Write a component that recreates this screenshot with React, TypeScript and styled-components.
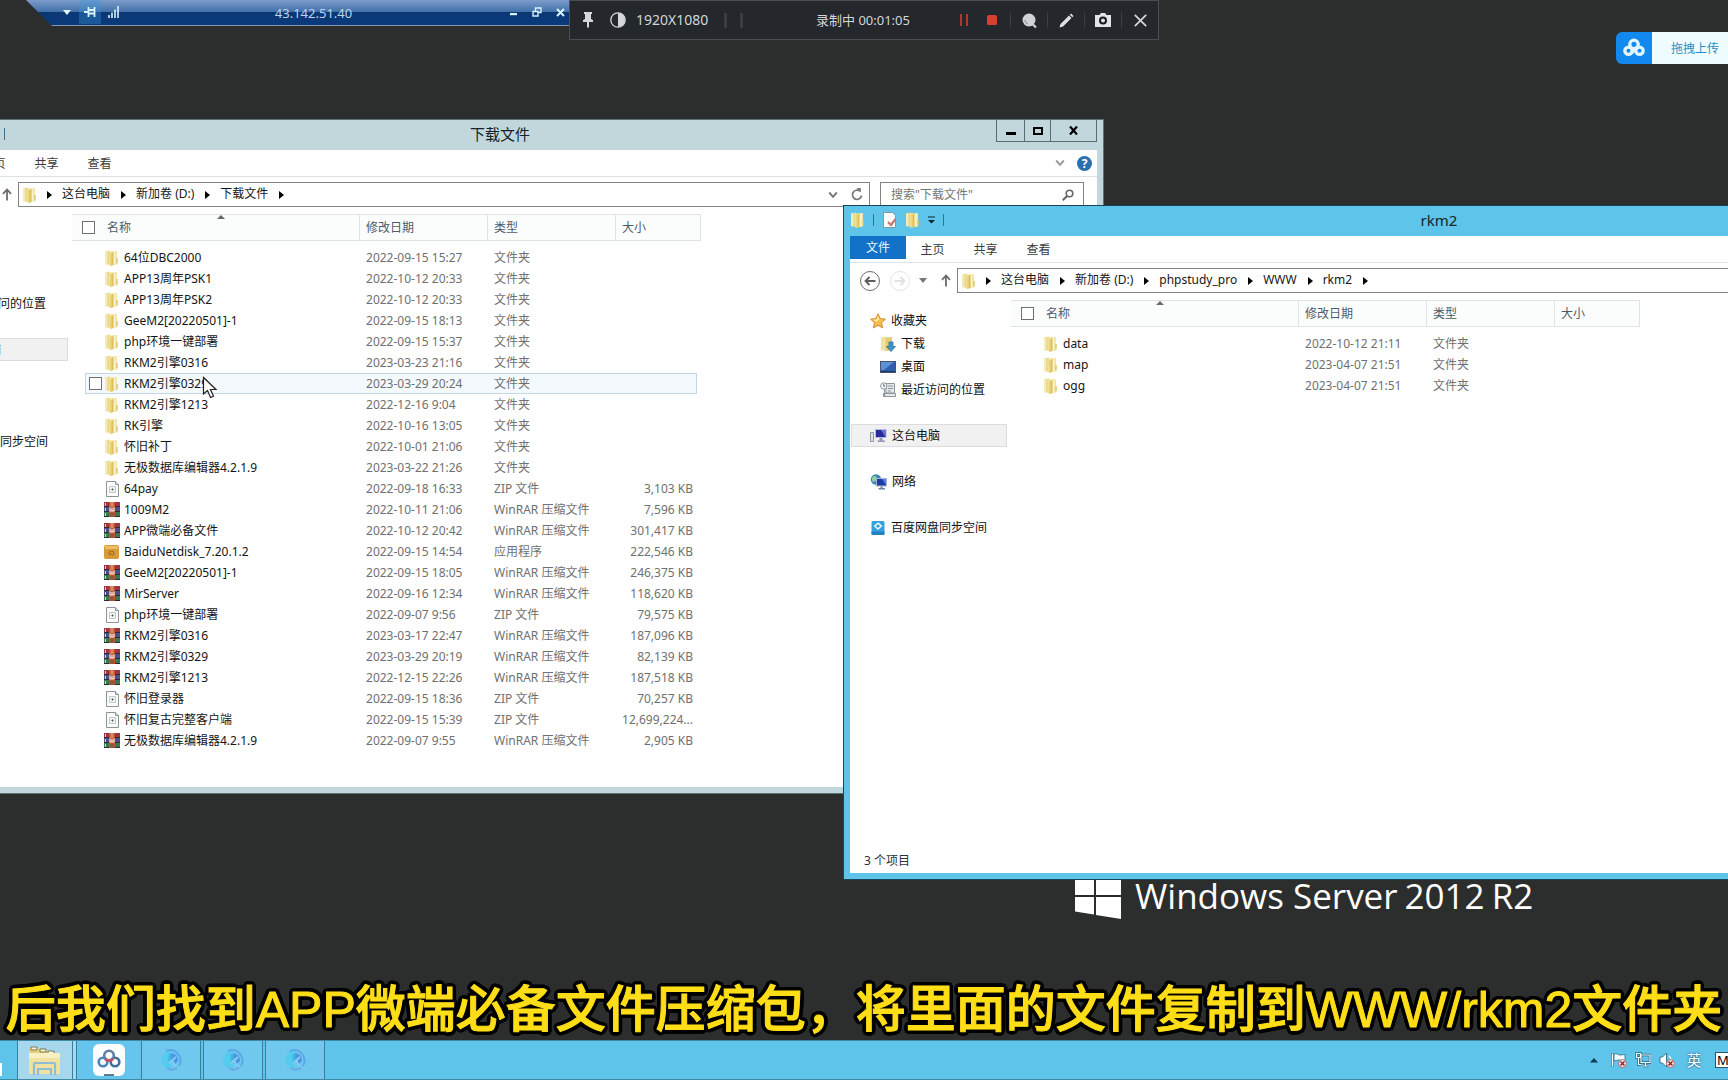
import React from "react";
import styled, { createGlobalStyle, css } from "styled-components";

const GlobalStyle = createGlobalStyle`
  *, *::before, *::after { box-sizing: border-box; }
  html, body, #root { height: 100%; }
  body {
    margin: 0;
    background: #2c2d2d;
    color: #111;
    font-family: "Noto Sans", "Noto Sans CJK SC", sans-serif;
    font-size: 12px;
    line-height: 16px;
  }
  button, input { font: inherit; color: inherit; }
  button { margin: 0; padding: 0; border: 0; background: none; }
  svg { display: block; flex: none; }
`;

/* ---------- icons ---------- */

const FolderIcon = () => (
  <svg width="15" height="16" viewBox="0 0 15 16">
    <path d="M1 1.500 6 .5V15l-5-1z" fill="#ebd98c" />
    <path d="M1 1.500 3.200 1v13.500L1 14z" fill="#f5ebba" />
    <path d="M5.500 1.500 13 1v13.500l-7.500 1z" fill="#f3e6a6" />
    <path d="M6 3.200 9.500 2v13L6 16z" fill="#dcc25c" />
    <path d="M6 3.200 7.600 2.600v12.800L6 16z" fill="#ecd67c" />
    <path d="M12.200 8h1.600v5.500h-1.600z" fill="#dfcb78" />
    <path d="M10.500 2v12.600" stroke="#faf4d2" strokeWidth="1.200" />
  </svg>
);

const ZipIcon = () => (
  <svg width="16" height="16" viewBox="0 0 16 16">
    <path d="M2.500.5h9l3 3v12h-12z" fill="#fafbfa" stroke="#8b9594" />
    <path d="M11.500.5v3h3" fill="#dfe5e4" stroke="#8b9594" />
    <path d="M5.500 5.500h6v6h-6z" fill="#f1f4f3" stroke="#c2cac8" />
    <path d="M8.500 7.500v2M7.500 8.500h2" stroke="#4b5957" strokeWidth="1" />
  </svg>
);

const RarIcon = () => (
  <svg width="16" height="15" viewBox="0 0 16 15">
    <path d="M0 0h16v5H0z" fill="#9c3540" />
    <path d="M0 5h16v5H0z" fill="#4a4f86" />
    <path d="M0 10h16v5H0z" fill="#3a7750" />
    <path d="M0 4.500h16M0 9.500h16M0 14.500h16" stroke="#33282f" />
    <path d="M1.500 1v3M1.500 6v3M1.500 11v3" stroke="#d3d2dc" />
    <path d="M5 0h6v15H5z" fill="#bd5238" />
    <path d="M6.500 0h3v5h-3z" fill="#e0865c" />
    <path d="M6 5.500V9h4V5.500M8 6v3" fill="none" stroke="#f1eadf" strokeWidth="1.200" />
    <path d="M6 11h4v4H6z" fill="#8d5a35" />
  </svg>
);

const ExeIcon = () => (
  <svg width="15" height="14" viewBox="0 0 15 14">
    <rect width="15" height="14" rx="2" fill="#d99a38" />
    <path d="M1 1h13v3H1z" fill="#edbd66" />
    <path d="M5 9.500c0-2 1-3.500 2.500-3.500S10 7.500 10 9.500M5.500 10.200h1.300M8.300 10.200h1.300M7.500 8v1.500" fill="none" stroke="#a76a18" strokeWidth="1.200" />
  </svg>
);

const StarIcon = () => (
  <svg width="16" height="16" viewBox="0 0 16 16">
    <path d="M8 .8l2.200 4.800 5.200.6-3.900 3.500 1.100 5.200L8 12.300l-4.600 2.600 1.100-5.200L.6 6.200l5.200-.6z" fill="#f8bd4c" stroke="#d58a27" />
    <path d="M8 2.500 9.500 6.500 6 9 3 6.800l3.500-.5z" fill="#fde3a0" />
  </svg>
);

const DownloadIcon = () => (
  <svg width="16" height="16" viewBox="0 0 16 16">
    <path d="M1 1.500 6 .5V15l-5-1z" fill="#f1e2a0" />
    <path d="M5.500 1.500 12 1v13l-6.500 1z" fill="#e3cc72" />
    <path d="M9 6h4v4.500h2.500L11 15.500 6.500 10.500H9z" fill="#3f95c8" stroke="#2a6f9f" strokeWidth=".8" />
  </svg>
);

const DesktopIcon = () => (
  <svg width="16" height="16" viewBox="0 0 16 16">
    <rect x=".5" y="2.500" width="15" height="11" fill="#2e5fae" stroke="#465568" />
    <path d="M1 3h13L4 11H1z" fill="#5d90d6" />
    <path d="M1 12.500h14" stroke="#1c3462" />
  </svg>
);

const RecentIcon = () => (
  <svg width="16" height="16" viewBox="0 0 16 16">
    <path d="M6 1.500h8.500V11H6zM3.500 11.500h12v3h-12z" fill="#e5e8ea" stroke="#8d959b" />
    <path d="M8 4h5M8 6.500h5M8 9h3" stroke="#8d959b" />
    <path d="M4.500 7v7" stroke="#8d959b" />
    <circle cx="3.800" cy="4" r="3.200" fill="#f6f8f9" stroke="#8d959b" />
    <path d="M3.800 2v2.200h1.500" fill="none" stroke="#616b72" />
  </svg>
);

const ComputerIcon = () => (
  <svg width="17" height="16" viewBox="0 0 17 16">
    <path d="M.5 4.500h3v9h-3z" fill="#dfe3ea" stroke="#8c93a1" />
    <rect x="5" y="1" width="11.500" height="9" fill="#b7bce0" />
    <rect x="6" y="2" width="9.500" height="7" fill="#2a2a98" />
    <path d="M11 2h4.500v7z" fill="#6b76d2" />
    <path d="M9.500 10h3v2.500H15V14H7.500v-1.500h2z" fill="#9399b8" />
  </svg>
);

const NetworkIcon = () => (
  <svg width="17" height="16" viewBox="0 0 17 16">
    <circle cx="6" cy="5.500" r="5.200" fill="#3e87b8" />
    <path d="M2 4c2-3 4-2 5 0S5 7 4 8 1.500 6 2 4z" fill="#8fd0a5" />
    <rect x="6.500" y="4.500" width="10" height="7.500" fill="#1f3ba8" stroke="#a8b3d4" />
    <path d="M12 5h4v6z" fill="#5b78dd" />
    <path d="M10.500 12.500h2V14H15v1.500H8.500V14h2z" fill="#6f7ea5" />
  </svg>
);

const NetdiskIcon = () => (
  <svg width="16" height="16" viewBox="0 0 16 16">
    <rect x="1.500" y="1" width="13" height="14" rx="1.500" fill="#36a1df" />
    <path d="M1.500 11.500h13V14q0 1-1 1h-11q-1 0-1-1z" fill="#2383c4" />
    <path d="M8 3.200 11.300 6 8 9 4.700 6z" fill="none" stroke="#eafaff" strokeWidth="1.600" />
  </svg>
);

const SheetIcon = () => (
  <svg width="15" height="16" viewBox="0 0 15 16">
    <path d="M1.500 .5h9l3 3v12h-12z" fill="#fff" stroke="#7d99a8" />
    <path d="M6 10l3 3 4.500-6" fill="none" stroke="#c5796a" strokeWidth="2.200" />
  </svg>
);

const Triangle = () => (
  <svg width="5" height="8" viewBox="0 0 5 8"><path d="M0 0l5 4-5 4z" fill="#000" /></svg>
);

const UpArrow = () => (
  <svg width="10" height="13" viewBox="0 0 10 13">
    <path d="M5 12.500V2M1 5.800 5 1.500l4 4.300" fill="none" stroke="#6b6b6b" strokeWidth="1.800" />
  </svg>
);

const Chevron = ({ color = "#777" }: { color?: string }) => (
  <svg width="10" height="8" viewBox="0 0 10 8">
    <path d="M1.200 1.500 5 5.800l3.800-4.300" fill="none" stroke={color} strokeWidth="1.900" />
  </svg>
);

/* ---------- explorer window ---------- */

const frame = { inactive: "#c2d7dc", active: "#5ec4ea" };

const Win = styled.section<{ $active: boolean; $left: number; $top: number }>`
  position: absolute;
  left: ${(p) => p.$left}px;
  top: ${(p) => p.$top}px;
  width: 1200px;
  height: 675px;
  display: flex;
  flex-direction: column;
  padding: 0 6px;
  padding-bottom: 6px;
  border: 1px solid ${(p) => (p.$active ? "#1a4358" : "#5d7276")};
  background: ${(p) => (p.$active ? frame.active : frame.inactive)};
`;

const TitleBar = styled.header`
  display: grid;
  grid-template-columns: 1fr auto 1fr;
  height: 30px;
  flex: none;
`;

const QuickBar = styled.div`
  display: flex;
  align-items: center;
  height: 28px;
  gap: 8px;
`;

const QuickButton = styled.button`
  display: flex;
`;

const QuickLine = styled.span`
  width: 1px;
  height: 12px;
  background: #3d6f86;
`;

const Title = styled.h1`
  margin: 0 8px 0 0;
  font-size: 15px;
  font-weight: 400;
  line-height: 28px;
  color: #13242b;
`;

const Controls = styled.div`
  justify-self: end;
  display: flex;
  height: 22px;
  border: 1px solid #566d73;
  border-top: 0;
`;

const Control = styled.button<{ $w: number }>`
  display: grid;
  place-items: center;
  width: ${(p) => p.$w}px;
  & + & { border-left: 1px solid #566d73; }
`;

const Sheet = styled.div`
  flex: 1;
  min-height: 0;
  display: flex;
  flex-direction: column;
  background: #fefffe;
`;

const Ribbon = styled.nav`
  display: flex;
  align-items: center;
  height: 27px;
  flex: none;
  border-bottom: 1px solid #dce3e2;
  padding-right: 5px;
`;

const Tab = styled.button<{ $main?: boolean }>`
  width: 53px;
  height: 26px;
  padding-top: 2px;
  color: #3b3b3b;
  ${(p) =>
    p.$main &&
    css`
      width: 56px;
      height: 23px;
      padding-top: 0;
      align-self: flex-start;
      background: #1272c8;
      color: #e8f7ff;
    `}
`;

const RibbonEnd = styled.div`
  margin-left: auto;
  display: flex;
  align-items: center;
  gap: 12px;
`;

const Help = styled.button`
  width: 15px;
  height: 15px;
  border-radius: 50%;
  background: #2a6fae;
  color: #fff;
  font-weight: 700;
  line-height: 15px;
`;

const AddressRow = styled.div`
  display: flex;
  align-items: center;
  flex: none;
  padding: 5px 13px 7px 10px;
`;

const Round = styled.button<{ $faint?: boolean }>`
  display: grid;
  place-items: center;
  width: 20px;
  height: 20px;
  margin-right: 10px;
  border: 1px solid ${(p) => (p.$faint ? "#e3e6e6" : "#6d6d6d")};
  border-radius: 50%;
`;

const HistoryButton = styled.button`
  display: flex;
  margin: 0 14px 0 -1px;
`;

const UpButton = styled.button`
  display: flex;
  margin-right: 6px;
`;

const PathBox = styled.div`
  flex: 1;
  display: flex;
  align-items: center;
  gap: 10px;
  height: 25px;
  padding: 0 6px 0 3px;
  border: 1px solid #7f8383;
`;

const Crumb = styled.a`
  padding: 0 1px 2px 0;
  color: #161616;
  text-decoration: none;
`;

const PathTools = styled.div`
  margin-left: auto;
  display: flex;
  align-items: center;
  gap: 13px;
`;

const SearchBox = styled.label`
  display: flex;
  align-items: center;
  width: 204px;
  height: 25px;
  margin-left: 10px;
  padding: 0 9px 0 10px;
  border: 1px solid #7f8383;
`;

const SearchInput = styled.input`
  flex: 1;
  min-width: 0;
  border: 0;
  padding: 0;
  outline: 0;
  background: none;
  &::placeholder { color: #767676; opacity: 1; }
`;

const Body = styled.div`
  flex: 1;
  min-height: 0;
  display: flex;
`;

const Nav = styled.ul`
  width: 161px;
  margin: 0;
  padding: 9px 4px 0 1px;
  list-style: none;
`;

const NavItem = styled.li<{ $child?: boolean; $on?: boolean; $gap?: boolean }>`
  display: flex;
  align-items: center;
  gap: 5px;
  height: 23px;
  margin-top: ${(p) => (p.$gap ? 23 : 0)}px;
  padding-left: ${(p) => (p.$child ? 29 : 19)}px;
  white-space: nowrap;
  ${(p) =>
    p.$on &&
    css`
      padding-left: 18px;
      background: #f0f1f0;
      border: 1px solid #dbdddc;
    `}
`;

const Files = styled.table`
  width: 629px;
  align-self: flex-start;
  table-layout: fixed;
  border-collapse: separate;
  border-spacing: 0;
  tbody::before {
    content: "";
    display: block;
    height: 6px;
  }
`;

const Head = styled.th`
  position: relative;
  height: 27px;
  padding: 0 0 0 6px;
  border: solid #dfe5e5;
  border-width: 1px 1px 1px 0;
  background: #fbfdfd;
  color: #4c5b6b;
  font-weight: 400;
  text-align: left;
`;

const HeadName = styled.div`
  display: flex;
  align-items: center;
  gap: 12px;
  padding-left: 4px;
`;

const SortMark = styled.svg`
  position: absolute;
  left: 145px;
  top: 0;
`;

const Check = styled.input.attrs({ type: "checkbox" })`
  appearance: none;
  width: 13px;
  height: 13px;
  margin: 0;
  border: 1px solid #707070;
  background: #fff;
`;

const Cell = styled.td<{ $dim?: boolean; $right?: boolean }>`
  height: 21px;
  padding: 0 4px 0 6px;
  color: ${(p) => (p.$dim ? "#707070" : "#151515")};
  text-align: ${(p) => (p.$right ? "right" : "left")};
  line-height: 20px;
  white-space: nowrap;
`;

const Gutter = styled.td`
  padding: 0;
`;

const Row = styled.tr<{ $hover?: boolean }>`
  ${(p) =>
    p.$hover &&
    css`
      ${Cell} {
        background: #f3f9fd;
        box-shadow: inset 0 1px #c3d7e4, inset 0 -1px #c3d7e4;
      }
      ${Cell}:nth-child(2) {
        box-shadow: inset 1px 0 #c3d7e4, inset 0 1px #c3d7e4, inset 0 -1px #c3d7e4;
      }
      ${Cell}:nth-child(5) {
        box-shadow: inset -1px 0 #c3d7e4, inset 0 1px #c3d7e4, inset 0 -1px #c3d7e4;
      }
    `}
`;

const FileName = styled.div`
  display: grid;
  grid-template-columns: 13px 16px 1fr;
  align-items: center;
  column-gap: 3px;
  margin-left: -2px;
`;

const NameText = styled.span`
  grid-column: 3;
`;

const IconSlot = styled.span`
  grid-column: 2;
  display: flex;
  margin-left: -1px;
`;

const Status = styled.footer`
  height: 24px;
  flex: none;
  padding: 3px 14px;
  line-height: 18px;
  color: #2a3238;
`;

type Kind = "folder" | "zip" | "rar" | "exe";
type FileEntry = { name: string; date: string; kind: Kind; size?: string; hover?: boolean };

const kindLabel: Record<Kind, string> = {
  folder: "文件夹",
  zip: "ZIP 文件",
  rar: "WinRAR 压缩文件",
  exe: "应用程序",
};

const kindIcon: Record<Kind, React.ReactNode> = {
  folder: <FolderIcon />,
  zip: <ZipIcon />,
  rar: <RarIcon />,
  exe: <ExeIcon />,
};

type ExplorerProps = {
  title: string;
  active: boolean;
  left: number;
  top: number;
  path: string[];
  files: FileEntry[];
};

function Explorer({ title, active, left, top, path, files }: ExplorerProps) {
  return (
    <Win $active={active} $left={left} $top={top}>
      <TitleBar>
        <QuickBar>
          <QuickButton aria-label="窗口菜单"><FolderIcon /></QuickButton>
          <QuickLine />
          <QuickButton aria-label="属性"><SheetIcon /></QuickButton>
          <QuickButton aria-label="新建文件夹"><FolderIcon /></QuickButton>
          <QuickButton aria-label="自定义">
            <svg width="7" height="8" viewBox="0 0 7 8">
              <path d="M0 .5h7v1H0zM0 4h7L3.500 7.500z" fill="#0b2733" />
            </svg>
          </QuickButton>
          <QuickLine />
        </QuickBar>
        <Title>{title}</Title>
        <Controls>
          <Control $w={27} aria-label="最小化">
            <svg width="10" height="10" viewBox="0 0 10 10"><path d="M0 6h10v3H0z" /></svg>
          </Control>
          <Control $w={26} aria-label="最大化">
            <svg width="10" height="8" viewBox="0 0 10 8"><path d="M1 1h8v6H1z" fill="none" stroke="#000" strokeWidth="2" /></svg>
          </Control>
          <Control $w={46} aria-label="关闭">
            <svg width="9" height="9" viewBox="0 0 9 9"><path d="M1 .5l7 8M8 .5l-7 8" stroke="#000" strokeWidth="2.200" /></svg>
          </Control>
        </Controls>
      </TitleBar>
      <Sheet>
        <Ribbon>
          <Tab $main>文件</Tab>
          <Tab>主页</Tab>
          <Tab>共享</Tab>
          <Tab>查看</Tab>
          <RibbonEnd>
            <Chevron color="#9a9a9a" />
            <Help aria-label="帮助">?</Help>
          </RibbonEnd>
        </Ribbon>
        <AddressRow>
          <Round aria-label="后退">
            <svg width="12" height="10" viewBox="0 0 12 10"><path d="M11.500 5H2M5.500 1 1.500 5l4 4" fill="none" stroke="#5f5f5f" strokeWidth="1.800" /></svg>
          </Round>
          <Round $faint aria-label="前进">
            <svg width="12" height="10" viewBox="0 0 12 10"><path d="M.5 5H10M6.500 1l4 4-4 4" fill="none" stroke="#e0e3e3" strokeWidth="1.800" /></svg>
          </Round>
          <HistoryButton aria-label="最近浏览的位置">
            <svg width="8" height="5" viewBox="0 0 8 5"><path d="M0 0h8L4 5z" fill="#777" /></svg>
          </HistoryButton>
          <UpButton aria-label="向上"><UpArrow /></UpButton>
          <PathBox>
            <FolderIcon />
            <Triangle />
            {path.map((part) => (
              <React.Fragment key={part}>
                <Crumb href="#">{part}</Crumb>
                <Triangle />
              </React.Fragment>
            ))}
            <PathTools>
              <Chevron />
              <svg width="12" height="13" viewBox="0 0 12 13">
                <path d="M9 3.200A4.600 4.600 0 1 0 10.600 7.500" fill="none" stroke="#777" strokeWidth="1.700" />
                <path d="M5.500 0h4.300v4.500z" fill="#777" />
              </svg>
            </PathTools>
          </PathBox>
          <SearchBox>
            <SearchInput aria-label="搜索" placeholder={`搜索"${title}"`} />
            <svg width="12" height="12" viewBox="0 0 12 12">
              <circle cx="7.500" cy="4.500" r="3.300" fill="none" stroke="#666" strokeWidth="1.600" />
              <path d="M5 7 .8 11.200" stroke="#666" strokeWidth="2" />
            </svg>
          </SearchBox>
        </AddressRow>
        <Body>
          <Nav>
            <NavItem><StarIcon />收藏夹</NavItem>
            <NavItem $child><DownloadIcon />下载</NavItem>
            <NavItem $child><DesktopIcon />桌面</NavItem>
            <NavItem $child><RecentIcon />最近访问的位置</NavItem>
            <NavItem $on $gap><ComputerIcon />这台电脑</NavItem>
            <NavItem $gap><NetworkIcon />网络</NavItem>
            <NavItem $gap><NetdiskIcon />百度网盘同步空间</NavItem>
          </Nav>
          <Files>
            <colgroup>
              <col width="13" />
              <col width="275" />
              <col width="128" />
              <col width="128" />
              <col width="81" />
              <col width="4" />
            </colgroup>
            <thead>
              <tr>
                <Head colSpan={2}>
                  <SortMark width="8" height="4" viewBox="0 0 8 4"><path d="M4 0l4 4H0z" fill="#666" /></SortMark>
                  <HeadName><Check aria-label="全选" />名称</HeadName>
                </Head>
                <Head>修改日期</Head>
                <Head>类型</Head>
                <Head colSpan={2}>大小</Head>
              </tr>
            </thead>
            <tbody>
              {files.map((f, i) => (
                <Row key={i} $hover={f.hover}>
                  <Gutter />
                  <Cell>
                    <FileName>
                      {f.hover && <Check aria-label={f.name} />}
                      <IconSlot>{kindIcon[f.kind]}</IconSlot>
                      <NameText>{f.name}</NameText>
                    </FileName>
                  </Cell>
                  <Cell $dim>{f.date}</Cell>
                  <Cell $dim>{kindLabel[f.kind]}</Cell>
                  <Cell $dim $right>{f.size}</Cell>
                  <Gutter />
                </Row>
              ))}
            </tbody>
          </Files>
        </Body>
        <Status>{files.length} 个项目</Status>
      </Sheet>
    </Win>
  );
}

const downloads: FileEntry[] = [
  { name: "64位DBC2000", date: "2022-09-15 15:27", kind: "folder" },
  { name: "APP13周年PSK1", date: "2022-10-12 20:33", kind: "folder" },
  { name: "APP13周年PSK2", date: "2022-10-12 20:33", kind: "folder" },
  { name: "GeeM2[20220501]-1", date: "2022-09-15 18:13", kind: "folder" },
  { name: "php环境一键部署", date: "2022-09-15 15:37", kind: "folder" },
  { name: "RKM2引擎0316", date: "2023-03-23 21:16", kind: "folder" },
  { name: "RKM2引擎0329", date: "2023-03-29 20:24", kind: "folder", hover: true },
  { name: "RKM2引擎1213", date: "2022-12-16 9:04", kind: "folder" },
  { name: "RK引擎", date: "2022-10-16 13:05", kind: "folder" },
  { name: "怀旧补丁", date: "2022-10-01 21:06", kind: "folder" },
  { name: "无极数据库编辑器4.2.1.9", date: "2023-03-22 21:26", kind: "folder" },
  { name: "64pay", date: "2022-09-18 16:33", kind: "zip", size: "3,103 KB" },
  { name: "1009M2", date: "2022-10-11 21:06", kind: "rar", size: "7,596 KB" },
  { name: "APP微端必备文件", date: "2022-10-12 20:42", kind: "rar", size: "301,417 KB" },
  { name: "BaiduNetdisk_7.20.1.2", date: "2022-09-15 14:54", kind: "exe", size: "222,546 KB" },
  { name: "GeeM2[20220501]-1", date: "2022-09-15 18:05", kind: "rar", size: "246,375 KB" },
  { name: "MirServer", date: "2022-09-16 12:34", kind: "rar", size: "118,620 KB" },
  { name: "php环境一键部署", date: "2022-09-07 9:56", kind: "zip", size: "79,575 KB" },
  { name: "RKM2引擎0316", date: "2023-03-17 22:47", kind: "rar", size: "187,096 KB" },
  { name: "RKM2引擎0329", date: "2023-03-29 20:19", kind: "rar", size: "82,139 KB" },
  { name: "RKM2引擎1213", date: "2022-12-15 22:26", kind: "rar", size: "187,518 KB" },
  { name: "怀旧登录器", date: "2022-09-15 18:36", kind: "zip", size: "70,257 KB" },
  { name: "怀旧复古完整客户端", date: "2022-09-15 15:39", kind: "zip", size: "12,699,224..." },
  { name: "无极数据库编辑器4.2.1.9", date: "2022-09-07 9:55", kind: "rar", size: "2,905 KB" },
];

const rkm2: FileEntry[] = [
  { name: "data", date: "2022-10-12 21:11", kind: "folder" },
  { name: "map", date: "2023-04-07 21:51", kind: "folder" },
  { name: "ogg", date: "2023-04-07 21:51", kind: "folder" },
];

/* ---------- desktop overlays ---------- */

const Screen = styled.main`
  position: relative;
  height: 100vh;
  overflow: hidden;
  display: flex;
  flex-direction: column;
  background: #2c2d2d;
`;

const Desktop = styled.div`
  position: relative;
  flex: 1;
`;

const RemoteBar = styled.div`
  position: absolute;
  left: 26px;
  top: 0;
  width: 545px;
  height: 26px;
  display: flex;
  align-items: center;
  padding: 0 0 2px 30px;
  color: #b9d4f0;
  background: linear-gradient(#7d9ccb 0, #4170a8 12px, #0b3874 12px, #0a3a7c 25px, #8595a8 25px);
  clip-path: polygon(0 0, 100% 0, 100% 100%, 26px 100%);
`;

const RemoteButton = styled.button<{ $on?: boolean }>`
  display: grid;
  place-items: center;
  width: 22px;
  height: 24px;
  background: ${(p) => (p.$on ? "rgba(60, 150, 215, 0.35)" : "none")};
  & + & { margin-left: 1px; }
`;

const RemoteHost = styled.span`
  flex: 1;
  padding-top: 2px;
  text-align: center;
  font-size: 13px;
`;

const Recorder = styled.div`
  position: absolute;
  left: 569px;
  top: 0;
  width: 590px;
  height: 40px;
  display: flex;
  align-items: center;
  padding-left: 11px;
  border: 1px solid #4b4e51;
  background: #24272c;
  color: #d3d6d8;
  font-size: 13px;
`;

const PinButton = styled.button`
  display: flex;
  margin-right: 15px;
`;

const Resolution = styled.span`
  width: 98px;
  padding-left: 10px;
  font-size: 14px;
`;

const Grip = styled.span`
  width: 3px;
  height: 15px;
  margin-right: 13px;
  background: #3a3d42;
`;

const RecState = styled.span`
  flex: 1;
  padding-left: 20px;
  text-align: center;
`;

const RecButton = styled.button`
  display: grid;
  place-items: center;
  width: 28px;
  height: 28px;
`;

const RecTool = styled.button`
  display: grid;
  place-items: center;
  width: 37px;
  height: 16px;
  border-left: 1px solid #3b3e44;
`;

const RecTools = styled.div`
  display: flex;
  margin-left: 4px;
`;

const Upload = styled.button`
  position: absolute;
  right: 0;
  top: 32px;
  display: flex;
  align-items: center;
  width: 112px;
  height: 32px;
  padding-right: 9px;
  border-radius: 6px 0 0 6px;
  background: linear-gradient(90deg, #1289ee 36px, #eefbff 36px);
  color: #2d8cc4;
`;

const UploadLogo = styled.span`
  display: grid;
  place-items: center;
  width: 36px;
`;

const UploadText = styled.span`
  flex: 1;
  padding-top: 1px;
  text-align: right;
`;

const Brand = styled.div`
  position: absolute;
  left: 1075px;
  top: 872px;
  display: flex;
  align-items: center;
  gap: 14px;
  color: #fff;
  font-family: "Open Sans", "Noto Sans", sans-serif;
  font-size: 35px;
  line-height: 48px;
  white-space: nowrap;
`;

const BrandName = styled.span`
  display: flex;
  gap: 7px;
`;

const Pointer = styled.svg`
  position: absolute;
  left: 202px;
  top: 376px;
`;

const outline = Array.from({ length: 24 }, (_, i) => {
  const a = (i / 24) * Math.PI * 2;
  return `${Math.round(Math.cos(a) * 4)}px ${Math.round(Math.sin(a) * 4)}px 0 #000`;
}).join(", ");

const Caption = styled.p`
  position: absolute;
  left: 0;
  right: 0;
  bottom: 0;
  margin: 0;
  display: flex;
  justify-content: center;
  font-family: "Liberation Sans", "Noto Sans CJK SC", sans-serif;
  font-size: 50px;
  font-weight: 500;
  line-height: 60px;
  color: #ffde17;
  -webkit-text-stroke: 1px #ffde17;
  text-shadow: ${outline};
  white-space: nowrap;
`;

/* ---------- taskbar ---------- */

const Taskbar = styled.footer`
  position: relative;
  display: flex;
  align-items: stretch;
  height: 40px;
  flex: none;
  border-top: 1px solid #3f88a6;
  border-bottom: 1px solid #3f88a6;
  background: #5ec4ea;
`;

const StartEdge = styled.button`
  width: 17px;
  display: flex;
  align-items: flex-end;
  padding-bottom: 3px;
`;

const Task = styled.button<{ $w: number; $bg?: string; $plain?: boolean }>`
  display: grid;
  place-items: center;
  width: ${(p) => p.$w}px;
  margin-right: ${(p) => (p.$plain ? 0 : 2)}px;
  background: ${(p) => p.$bg ?? "#70c8ee"};
  border: solid #36809e;
  border-width: 0 ${(p) => (p.$plain ? 0 : 1)}px 0 1px;
`;

const Stack = styled.span`
  width: 3px;
  margin-left: -2px;
  background: #a4d8ef;
`;

const Tray = styled.div`
  margin-left: auto;
  display: flex;
  align-items: center;
  gap: 8px;
  color: #f4fcff;
  font-size: 15px;
`;

const TrayButton = styled.button`
  display: flex;
`;

const Language = styled.button`
  width: 18px;
  margin: 0 4px 0 2px;
  color: #fff;
  text-shadow: 0 0 1px #1d5b79, 0 0 2px #1d5b79;
`;

const Ime = styled.button`
  width: 13px;
  height: 16px;
  overflow: hidden;
  padding-left: 1px;
  border: 1px solid #2c5465;
  border-right: 0;
  background: #fff;
  color: #000;
  font-size: 13px;
  line-height: 14px;
  text-align: left;
`;

const NetdiskMark = () => (
  <svg width="22" height="22" viewBox="0 0 24 24" fill="none" stroke="#dff6ff" strokeWidth="3.600">
    <circle cx="12" cy="8" r="4.600" />
    <circle cx="6" cy="15" r="4" />
    <circle cx="18" cy="15" r="4" />
    <path d="M9 17.500l6-6" />
  </svg>
);

const KIcon = () => (
  <svg width="28" height="28" viewBox="0 0 28 28">
    <path d="M4 14a9 9 0 0 1 10-9v18a9 9 0 0 1-10-9z" fill="#55cbed" />
    <path d="M9 5A10.500 10.500 0 0 1 22 20" fill="none" stroke="#5ba8e8" strokeWidth="2" />
    <path d="M14 7a7.500 7.500 0 0 1 7 8l-4 4-3-4z" fill="#4f93e4" />
    <path d="M13 8v9" stroke="#3cb8e4" strokeWidth="3" />
    <path d="M12 17l7-6M15 14l3 6" stroke="#86d0f3" strokeWidth="1.800" />
    <path d="M10 22l4 2 6-2" stroke="#6aa6e8" strokeWidth="1.800" fill="none" />
  </svg>
);

const BadgeX = () => (
  <>
    <circle cx="11.500" cy="11.500" r="4" fill="#f5e4e4" stroke="#a3545c" strokeWidth=".8" />
    <path d="M9.500 9.500l4 4M13.500 9.500l-4 4" stroke="#8e2630" strokeWidth="1.500" />
  </>
);

export default function App() {
  return (
    <Screen>
      <GlobalStyle />
      <Desktop>
        <Brand>
          <svg width="46" height="46" viewBox="0 0 46 46" fill="#fff">
            <path d="M0 7 19 4.500V22H0zM21 4.200 46 1v21H21zM0 24h19v17.500L0 38.500zM21 24h25v22l-25-4z" />
          </svg>
          <BrandName>
            <span>Windows Server</span>
            <span>2012</span>
            <span>R2</span>
          </BrandName>
        </Brand>

        <Explorer title="下载文件" active={false} left={-96} top={119} path={["这台电脑", "新加卷 (D:)", "下载文件"]} files={downloads} />
        <Explorer title="rkm2" active left={843} top={205} path={["这台电脑", "新加卷 (D:)", "phpstudy_pro", "WWW", "rkm2"]} files={rkm2} />

        <RemoteBar>
          <RemoteButton aria-label="菜单">
            <svg width="8" height="5" viewBox="0 0 8 5"><path d="M0 0h8L4 5z" fill="#e6f6ff" /></svg>
          </RemoteButton>
          <RemoteButton $on aria-label="固定">
            <svg width="12" height="10" viewBox="0 0 12 10"><path d="M0 5h4M4.500 0v10M10.500 0v10M5 3h5M5 6.500h5" stroke="#d9f3ff" strokeWidth="1.800" /></svg>
          </RemoteButton>
          <RemoteButton aria-label="连接质量">
            <svg width="11" height="12" viewBox="0 0 11 12"><path d="M1 9v3M4 6.500V12M7 3.500V12M10 0v12" stroke="#d9f3ff" strokeWidth="1.600" /></svg>
          </RemoteButton>
          <RemoteHost>43.142.51.40</RemoteHost>
          <RemoteButton aria-label="最小化">
            <svg width="8" height="8" viewBox="0 0 8 8"><path d="M0 5h7v2.200H0z" fill="#d9f3ff" /></svg>
          </RemoteButton>
          <RemoteButton aria-label="还原">
            <svg width="10" height="10" viewBox="0 0 10 10"><path d="M1 4.500h5V9H1zM3.500 4V1H9v4.500H6.500" fill="none" stroke="#d9f3ff" strokeWidth="1.400" /></svg>
          </RemoteButton>
          <RemoteButton aria-label="断开">
            <svg width="9" height="9" viewBox="0 0 9 9"><path d="M1 1l7 7M8 1 1 8" stroke="#d9f3ff" strokeWidth="2" /></svg>
          </RemoteButton>
        </RemoteBar>

        <Recorder>
          <PinButton aria-label="置顶">
            <svg width="14" height="16" viewBox="0 0 14 16" fill="#d5d8da"><path d="M3 0h8v2h-1v5l2 1v2H8v5l-1 1-1-1v-5H2V8l2-1V2H3z" /></svg>
          </PinButton>
          <svg width="16" height="16" viewBox="0 0 16 16">
            <circle cx="8" cy="8" r="7.200" fill="none" stroke="#d5d8da" strokeWidth="1.300" />
            <path d="M8 1a7 7 0 0 1 0 14z" fill="#d5d8da" />
          </svg>
          <Resolution>1920X1080</Resolution>
          <Grip />
          <Grip />
          <RecState>录制中 00:01:05</RecState>
          <RecButton aria-label="暂停">
            <svg width="8" height="12" viewBox="0 0 8 12"><path d="M1 0v12M7 0v12" stroke="#c23a2c" strokeWidth="1.800" /></svg>
          </RecButton>
          <RecButton aria-label="停止">
            <svg width="10" height="10" viewBox="0 0 10 10"><rect width="10" height="10" rx="1.500" fill="#d8402f" /></svg>
          </RecButton>
          <RecTools>
            <RecTool aria-label="放大">
              <svg width="15" height="15" viewBox="0 0 15 15"><circle cx="7" cy="7" r="6.500" fill="#cfd3d6" /><path d="M3 7a4 4 0 0 0 3 4" fill="none" stroke="#83898e" /><path d="M10.500 11l3.500 3.500" stroke="#cfd3d6" strokeWidth="2.200" /></svg>
            </RecTool>
            <RecTool aria-label="画笔">
              <svg width="15" height="15" viewBox="0 0 15 15" fill="#dfe2e4"><path d="M.5 14.500 1.500 11 10 2.500 12.500 5 4 13.500zM10.800 1.700 12 .5 14.500 3l-1.200 1.200z" /></svg>
            </RecTool>
            <RecTool aria-label="截图">
              <svg width="16" height="14" viewBox="0 0 16 14"><path d="M0 2h4.500L6 0h4l1.500 2H16v12H0z" fill="#e2e5e7" /><circle cx="8" cy="7.500" r="3" fill="none" stroke="#17191c" strokeWidth="2" /></svg>
            </RecTool>
            <RecTool aria-label="关闭">
              <svg width="13" height="13" viewBox="0 0 13 13"><path d="M.8.8l11.400 11.400M12.200.8.8 12.200" stroke="#d5d8da" strokeWidth="1.700" /></svg>
            </RecTool>
          </RecTools>
        </Recorder>

        <Upload>
          <UploadLogo><NetdiskMark /></UploadLogo>
          <UploadText>拖拽上传</UploadText>
        </Upload>

        <Pointer width="16" height="23" viewBox="0 0 16 23">
          <path d="M1.500 1.500v16.500l4-3.500 3 7 3-1.300-3-6.700h5.500z" fill="#fff" stroke="#222" strokeWidth="1.200" />
        </Pointer>

        <Caption>后我们找到APP微端必备文件压缩包，将里面的文件复制到WWW/rkm2文件夹</Caption>
      </Desktop>

      <Taskbar>
        <StartEdge aria-label="开始">
          <svg width="2" height="13" viewBox="0 0 2 13"><path d="M0 0h2v13H0z" fill="#fff" /></svg>
        </StartEdge>
        <Task $w={56} $bg="#a6d7ec" aria-label="文件资源管理器">
          <svg width="34" height="32" viewBox="0 0 34 32">
            <path d="M2 4h8l1 2h7l1 2h7l1 2h4v20H2z" fill="#e6d07c" />
            <path d="M3 3h6v3H3zM12 5h6v3h-6zM20 7h6v3h-6z" fill="#f4f1d9" stroke="#6d6330" strokeWidth=".8" />
            <path d="M1 9h31v20q0 1-1 1H2q-1 0-1-1z" fill="#f1e2a0" />
            <path d="M1 9h31v5H1z" fill="#f8efc4" />
            <path d="M6 31V20q0-1 1-1h19q1 0 1 1v11M10 31v-6h13v6" fill="none" stroke="#8dbbd8" strokeWidth="2.200" />
          </svg>
        </Task>
        <Stack />
        <Task $w={65} $plain $bg="#66c5ec" aria-label="百度网盘">
          <svg width="32" height="34" viewBox="0 0 32 34">
            <rect y="1" width="32" height="32" rx="6" fill="#fbfdff" />
            <g fill="none" strokeWidth="2.600">
              <circle cx="10" cy="19" r="4.300" stroke="#4a86ba" />
              <circle cx="22" cy="19" r="4.300" stroke="#3f6f9f" />
              <circle cx="16" cy="12.500" r="4.800" stroke="#5f7fa5" />
              <path d="M12 16a5.500 5.500 0 0 0 8 0" stroke="#c9525b" />
            </g>
            <path d="M11 31h10v2H11z" fill="#5c7b8b" />
          </svg>
        </Task>
        <Task $w={60} aria-label="K1"><KIcon /></Task>
        <Task $w={60} aria-label="K2"><KIcon /></Task>
        <Task $w={60} aria-label="K3"><KIcon /></Task>
        <Tray>
          <TrayButton aria-label="显示隐藏的图标">
            <svg width="13" height="5" viewBox="0 0 13 5"><path d="M4 0l4 4.500H0z" fill="#0f3c52" /></svg>
          </TrayButton>
          <TrayButton aria-label="操作中心">
            <svg width="16" height="16" viewBox="0 0 16 16">
              <path d="M1.500 1v14" stroke="#2d6b88" strokeWidth="2.500" />
              <path d="M1.500 1.500v13" stroke="#fff" strokeWidth="1.400" />
              <path d="M3 2c3-1 4 1 6 1s3-.5 5-.5V9c-3 .5-4-1-6-1s-3 .5-5 1z" fill="#f2fbff" stroke="#2d6b88" strokeWidth=".8" />
              <BadgeX />
            </svg>
          </TrayButton>
          <TrayButton aria-label="网络">
            <svg width="16" height="16" viewBox="0 0 16 16">
              <path d="M6 3h9v7.500H6zM8 14h6M10.500 11v3M1.500 1.500h4v4h-4zM3.500 6v6.500H6" fill="none" stroke="#246480" strokeWidth="2.600" />
              <path d="M6 3h9v7.500H6zM8 14h6M10.500 11v3M1.500 1.500h4v4h-4zM3.500 6v6.500H6" fill="none" stroke="#f0faff" strokeWidth="1.200" />
            </svg>
          </TrayButton>
          <TrayButton aria-label="音量">
            <svg width="16" height="16" viewBox="0 0 16 16">
              <path d="M1 5h2.500l4-4v14l-4-4H1z" fill="#fff" stroke="#2d6b88" strokeWidth=".9" />
              <path d="M10 4q2 1.500 2 4" fill="none" stroke="#fff" strokeWidth="1.300" />
              <BadgeX />
            </svg>
          </TrayButton>
          <Language>英</Language>
          <Ime>M</Ime>
        </Tray>
      </Taskbar>
    </Screen>
  );
}
